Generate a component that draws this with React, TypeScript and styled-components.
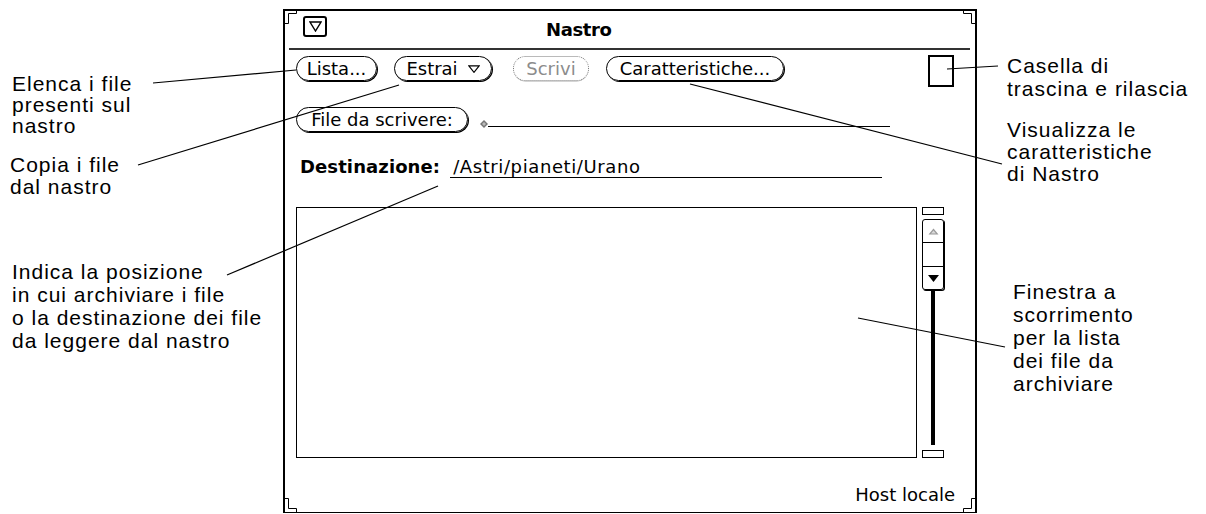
import React from 'react';
import styled, { createGlobalStyle } from 'styled-components';

const Global = createGlobalStyle`
  html, body { margin: 0; padding: 0; background: #fff; }
  body { width: 1206px; height: 514px; overflow: hidden; }
`;

const Stage = styled.div`
  position: relative;
  width: 1206px;
  height: 514px;
  display: flex;
  align-items: flex-start;
  background: #fff;
  color: #000;
`;

const Notes = styled.div<{ $w?: number; $pl: number; $pt: number }>`
  display: flex;
  flex-direction: column;
  align-items: flex-start;
  box-sizing: border-box;
  width: ${(p) => (p.$w ? `${p.$w}px` : 'auto')};
  flex: ${(p) => (p.$w ? 'none' : '1')};
  padding: ${(p) => p.$pt}px 0 0 ${(p) => p.$pl}px;
  font-family: "Liberation Sans", Arial, sans-serif;
  font-size: 21px;
  letter-spacing: 1px;
`;

const Note = styled.div<{ $mt: number; $lh: number; $ml?: number }>`
  margin-top: ${(p) => p.$mt}px;
  margin-left: ${(p) => p.$ml ?? 0}px;
  line-height: ${(p) => p.$lh}px;
  white-space: pre;
`;

const Window = styled.div`
  position: relative;
  flex: none;
  width: 694px;
  height: 504px;
  margin-top: 9px;
  box-sizing: border-box;
  border-style: solid;
  border-color: #000;
  border-width: 2px 2px 1px 2px;
  display: flex;
  flex-direction: column;
  font-family: "DejaVu Sans", "Liberation Sans", sans-serif;
  font-size: 18px;
`;

const Corner = styled.svg<{ $x: 'left' | 'right'; $y: 'top' | 'bottom' }>`
  position: absolute;
  width: 16px;
  height: 16px;
  ${(p) => p.$x}: -2px;
  ${(p) => p.$y}: ${(p) => (p.$y === 'top' ? -2 : -1)}px;
  transform: scale(${(p) => (p.$x === 'right' ? -1 : 1)}, ${(p) => (p.$y === 'bottom' ? -1 : 1)});
`;

const TitleBar = styled.div`
  flex: none;
  height: 37px;
  display: flex;
  align-items: flex-start;
  padding-left: 18px;
`;

const MenuBox = styled.div`
  margin-top: 5px;
  width: 24px;
  height: 21px;
  box-sizing: border-box;
  border: 2px solid #000;
  border-radius: 3px;
  display: flex;
  align-items: center;
  justify-content: center;
`;

const Title = styled.div`
  margin: 10px 0 0 219px;
  font-weight: bold;
  line-height: 18px;
  letter-spacing: -0.4px;
`;

const Divider = styled.div`
  flex: none;
  height: 2px;
  background: #333;
  margin: 0 5px 0 4px;
`;

const Controls = styled.div`
  flex: none;
  display: flex;
  align-items: flex-start;
  margin-top: 6px;
  height: 31px;
  padding: 0 21px 0 11px;
`;

const Btn = styled.div<{ $w: number; $ml?: number; $off?: boolean }>`
  flex: none;
  box-sizing: border-box;
  width: ${(p) => p.$w}px;
  height: 25px;
  margin-left: ${(p) => p.$ml ?? 0}px;
  border: 1px ${(p) => (p.$off ? 'dotted #777' : 'solid #000')};
  border-radius: 13px;
  box-shadow: ${(p) => (p.$off ? '0 1px 0 -0.5px #aaa' : '1px 1px 0 #000')};
  display: flex;
  align-items: center;
  justify-content: center;
  gap: 10px;
  line-height: 23px;
  color: ${(p) => (p.$off ? '#8c8c8c' : '#000')};
  white-space: nowrap;
`;

const DropBox = styled.div`
  margin-left: auto;
  margin-top: -1px;
  width: 26px;
  height: 32px;
  box-sizing: border-box;
  border: 2px solid #000;
`;

const FileRow = styled.div`
  flex: none;
  display: flex;
  align-items: flex-start;
  margin-top: 20px;
  padding: 0 85px 0 11px;
`;

const FileField = styled.div`
  flex: 1;
  display: flex;
  align-items: flex-start;
  margin: 13px 0 0 12px;
`;

const FieldLine = styled.div`
  flex: 1;
  margin-top: 6px;
  border-top: 1px solid #000;
`;

const DestRow = styled.div`
  flex: none;
  display: flex;
  align-items: flex-start;
  margin-top: 25px;
  padding: 0 93px 0 15px;
  line-height: 20px;
`;

const DestLabel = styled.div`
  font-weight: bold;
  letter-spacing: 0.1px;
`;

const DestValue = styled.div`
  flex: 1;
  margin-left: 10px;
  padding-left: 3px;
  border-bottom: 1px solid #000;
  letter-spacing: 0.6px;
`;

const ListRow = styled.div`
  flex: none;
  display: flex;
  height: 251px;
  margin-top: 29px;
  padding-left: 11px;
`;

const ListBox = styled.div`
  width: 621px;
  box-sizing: border-box;
  border: 1px solid #000;
  background: #fff;
`;

const ScrollCol = styled.div`
  width: 22px;
  margin-left: 5px;
  display: flex;
  flex-direction: column;
  align-items: stretch;
`;

const Anchor = styled.div<{ $mt?: number }>`
  flex: none;
  height: 8px;
  margin-top: ${(p) => p.$mt ?? 0}px;
  box-sizing: border-box;
  border: 1px solid #000;
`;

const Elevator = styled.div`
  flex: none;
  height: 71px;
  margin-top: 4px;
  box-sizing: border-box;
  border: 1px solid #000;
  border-radius: 3px;
  box-shadow: 1px 1px 0 #000;
  display: flex;
  flex-direction: column;
`;

const Seg = styled.div<{ $h: number; $line?: boolean }>`
  flex: none;
  height: ${(p) => p.$h}px;
  box-sizing: border-box;
  border-top: ${(p) => (p.$line ? '1px solid #000' : 'none')};
  display: flex;
  align-items: center;
  justify-content: center;
`;

const Cable = styled.div`
  flex: 1;
  width: 4px;
  align-self: center;
  background: #000;
`;

const Footer = styled.div`
  flex: none;
  margin-top: 27px;
  padding-right: 20px;
  line-height: 20px;
  text-align: right;
`;

const Leaders = styled.svg`
  position: absolute;
  left: 0;
  top: 0;
  width: 1206px;
  height: 514px;
  pointer-events: none;
`;

const cornerPath = 'M13.5 0 V4.5 H5.5 V14.5 H0';

const lines: [number, number, number, number][] = [
  [153, 83, 296, 70],
  [138, 165, 399, 85],
  [227, 275, 438, 186],
  [947, 69, 998, 66],
  [690, 84, 1002, 164],
  [858, 318, 1005, 347],
];

export default function App() {
  return (
    <>
      <Global />
      <Stage>
        <Notes $w={283} $pl={12} $pt={73}>
          <Note $mt={0} $lh={21}>{'Elenca i file\npresenti sul\nnastro'}</Note>
          <Note $mt={18} $lh={22} $ml={-2}>{'Copia i file\ndal nastro'}</Note>
          <Note $mt={62} $lh={23}>
            {'Indica la posizione\nin cui archiviare i file\no la destinazione dei file\nda leggere dal nastro'}
          </Note>
        </Notes>

        <Window>
          {(['left', 'right'] as const).map((x) =>
            (['top', 'bottom'] as const).map((y) => (
              <Corner key={x + y} $x={x} $y={y} viewBox="0 0 16 16">
                <path d={cornerPath} fill="none" stroke="#000" strokeWidth="1" />
              </Corner>
            ))
          )}
          <TitleBar>
            <MenuBox>
              <svg width="13" height="11" viewBox="0 0 13 11">
                <polygon points="1,1 12,1 6.5,10" fill="none" stroke="#000" strokeWidth="1.4" />
              </svg>
            </MenuBox>
            <Title>Nastro</Title>
          </TitleBar>
          <Divider />
          <Controls>
            <Btn $w={81}>Lista...</Btn>
            <Btn $w={98} $ml={17}>
              <span>Estrai</span>
              <svg width="12" height="8" viewBox="0 0 12 8">
                <polygon points="0.8,0.8 11.2,0.8 6,7.3" fill="none" stroke="#000" strokeWidth="1.2" />
              </svg>
            </Btn>
            <Btn $w={76} $ml={21} $off>
              Scrivi
            </Btn>
            <Btn $w={178} $ml={17}>
              Caratteristiche...
            </Btn>
            <DropBox />
          </Controls>
          <FileRow>
            <Btn $w={172}>File da scrivere:</Btn>
            <FileField>
              <svg width="8" height="8" viewBox="0 0 8 8">
                <polygon points="4,0 8,4 4,8 0,4" fill="#777" />
                <polygon points="4,2 6,4 4,6 2,4" fill="#bbb" />
              </svg>
              <FieldLine />
            </FileField>
          </FileRow>
          <DestRow>
            <DestLabel>Destinazione:</DestLabel>
            <DestValue>/Astri/pianeti/Urano</DestValue>
          </DestRow>
          <ListRow>
            <ListBox />
            <ScrollCol>
              <Anchor />
              <Elevator>
                <Seg $h={22}>
                  <svg width="11" height="7" viewBox="0 0 11 7">
                    <polygon points="5.5,0.5 10.5,6.5 0.5,6.5" fill="#9a9a9a" />
                    <polygon points="5.5,2.5 8,5.5 3,5.5" fill="#d8d8d8" />
                  </svg>
                </Seg>
                <Seg $h={24} $line />
                <Seg $h={23} $line>
                  <svg width="11" height="7" viewBox="0 0 11 7">
                    <polygon points="0,0 11,0 5.5,7" fill="#000" />
                  </svg>
                </Seg>
              </Elevator>
              <Cable />
              <Anchor $mt={5} />
            </ScrollCol>
          </ListRow>
          <Footer>Host locale</Footer>
        </Window>

        <Notes $pl={30} $pt={54}>
          <Note $mt={0} $lh={23}>{'Casella di\ntrascina e rilascia'}</Note>
          <Note $mt={19} $lh={22}>{'Visualizza le\ncaratteristiche\ndi Nastro'}</Note>
          <Note $mt={95} $lh={23} $ml={6}>
            {'Finestra a\nscorrimento\nper la lista\ndei file da\narchiviare'}
          </Note>
        </Notes>

        <Leaders viewBox="0 0 1206 514">
          {lines.map(([x1, y1, x2, y2], i) => (
            <line key={i} x1={x1} y1={y1} x2={x2} y2={y2} stroke="#000" strokeWidth="1.2" />
          ))}
        </Leaders>
      </Stage>
    </>
  );
}
